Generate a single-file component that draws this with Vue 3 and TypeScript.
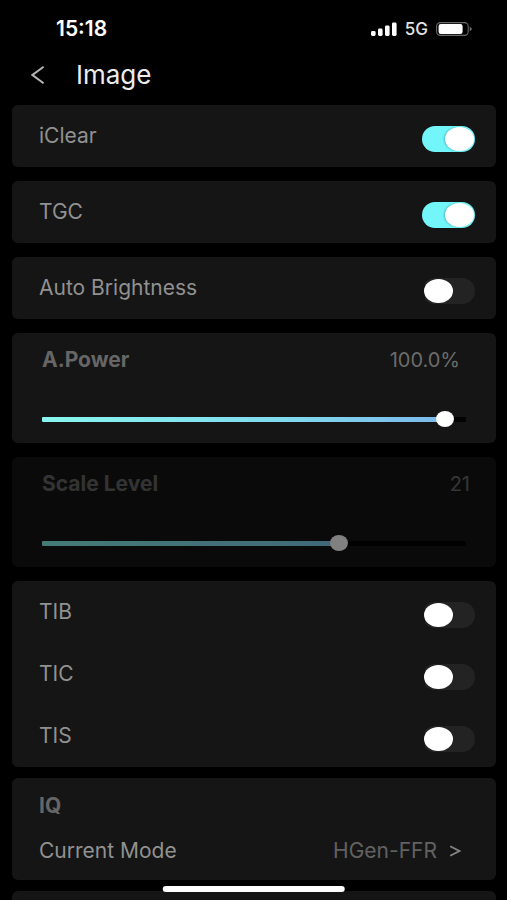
<script setup lang="ts">
import { reactive } from 'vue'

interface Toggle {
  id: string
  label: string
  on: boolean
}

interface Slider {
  id: string
  label: string
  value: number
  min: number
  max: number
  step: number
  unit: string
  digits: number
  disabled: boolean
}

const toggles = reactive<Toggle[]>([
  { id: 'iclear', label: 'iClear', on: true },
  { id: 'tgc', label: 'TGC', on: true },
  { id: 'auto-brightness', label: 'Auto Brightness', on: false },
])

const sliders = reactive<Slider[]>([
  { id: 'power', label: 'A.Power', value: 100, min: 0, max: 103, step: 0.5, unit: '%', digits: 1, disabled: false },
  { id: 'scale', label: 'Scale Level', value: 21, min: 4, max: 28, step: 1, unit: '', digits: 0, disabled: true },
])

const indices = reactive<Toggle[]>([
  { id: 'tib', label: 'TIB', on: false },
  { id: 'tic', label: 'TIC', on: false },
  { id: 'tis', label: 'TIS', on: false },
])

function fraction(s: Slider): number {
  return (s.value - s.min) / (s.max - s.min)
}
</script>

<template>
  <div class="screen">
    <div class="status">
      <span class="time">15:18</span>
      <div class="indicators">
        <svg class="signal" viewBox="0 0 26 14" aria-hidden="true">
          <rect x="0" y="9" width="4.6" height="5" rx="1.4" />
          <rect x="7" y="6.5" width="4.6" height="7.5" rx="1.4" />
          <rect x="14" y="3.5" width="4.6" height="10.5" rx="1.4" />
          <rect x="21" y="0.5" width="4.6" height="13.5" rx="1.4" />
        </svg>
        <span class="network">5G</span>
        <svg class="battery" viewBox="0 0 36 14" aria-hidden="true">
          <rect x="0.6" y="0.6" width="31.6" height="12.8" rx="3.8" fill="none" stroke="#6a6a6a" stroke-width="1.1" />
          <rect x="2.6" y="2.1" width="24" height="9.8" rx="2.2" fill="#fff" />
          <path d="M33.7 4.8 Q35.9 5.6 35.9 7 T33.7 9.2 Z" fill="#6a6a6a" />
        </svg>
      </div>
    </div>

    <header class="header">
      <button class="back" type="button" aria-label="Back">
        <svg viewBox="0 0 14 20" aria-hidden="true">
          <path d="M12.6 1.8 L1.5 10 L12.6 18.2" />
        </svg>
      </button>
      <h1>Image</h1>
    </header>

    <main class="content">
      <div class="stack">
        <section v-for="t in toggles" :key="t.id" class="card">
          <div class="row">
            <label :for="t.id">{{ t.label }}</label>
            <input :id="t.id" v-model="t.on" class="switch" type="checkbox" role="switch" />
          </div>
        </section>

        <section v-for="s in sliders" :key="s.id" class="card slider-card" :class="{ dimmed: s.disabled }">
          <div class="slider-head">
            <label class="caption" :for="s.id">{{ s.label }}</label>
            <output :for="s.id" :class="{ inset: s.unit }">{{ s.value.toFixed(s.digits) }}{{ s.unit }}</output>
          </div>
          <input
            :id="s.id"
            v-model.number="s.value"
            class="slider"
            type="range"
            :min="s.min"
            :max="s.max"
            :step="s.step"
            :disabled="s.disabled"
            :style="{ '--fraction': fraction(s) }"
          />
        </section>

        <section class="card">
          <div v-for="t in indices" :key="t.id" class="row">
            <label :for="t.id">{{ t.label }}</label>
            <input :id="t.id" v-model="t.on" class="switch" type="checkbox" role="switch" />
          </div>
        </section>
      </div>

      <div class="stack tail">
        <section class="card mode-card">
          <h2 class="caption">IQ</h2>
          <button class="mode" type="button">
            <span>Current Mode</span>
            <span class="mode-value">
              HGen-FFR
              <svg viewBox="0 0 12 12" aria-hidden="true">
                <path d="M1.2 1.2 L10.4 6 L1.2 10.8" />
              </svg>
            </span>
          </button>
        </section>
        <section class="card next-card"></section>
      </div>
    </main>

    <div class="home-bar"></div>
  </div>
</template>

<style>
body {
  margin: 0;
  background: #000;
}
</style>

<style scoped>
.screen {
  position: relative;
  display: flex;
  flex-direction: column;
  box-sizing: border-box;
  height: 100vh;
  overflow: hidden;
  background: #000;
  color: #919191;
  font-family: Inter, "Liberation Sans", sans-serif;
  font-size: 21px;
  line-height: 20px;
}

.status {
  display: flex;
  flex: none;
  align-items: center;
  justify-content: space-between;
  padding: 19px 35px 0 56px;
  color: #fff;
}

.time {
  font-size: 21px;
  font-weight: 600;
}

.indicators {
  display: flex;
  align-items: center;
  gap: 8px;
}

.signal {
  width: 26px;
  height: 14px;
  fill: #fff;
}

.network {
  color: #e4e4e4;
  font-size: 17px;
  font-weight: 500;
}

.battery {
  width: 36px;
  height: 14px;
}

.header {
  display: flex;
  flex: none;
  align-items: center;
  gap: 22px;
  padding: 20px 22px 14px;
}

.back {
  display: flex;
  align-items: center;
  justify-content: center;
  width: 32px;
  height: 32px;
  padding: 0;
  border: 0;
  background: none;
}

.back svg {
  width: 14px;
  height: 20px;
  fill: none;
  stroke: #b4b4b4;
  stroke-width: 2;
}

h1 {
  margin: 0;
  color: #ececec;
  font-size: 26px;
  font-weight: 400;
  line-height: 32px;
}

.content {
  flex: 1;
  min-height: 0;
  overflow: hidden;
  padding: 0 11px 0 12px;
}

.stack {
  display: flex;
  flex-direction: column;
  gap: 14px;
}

.tail {
  gap: 11px;
  margin-top: 11px;
}

.card {
  border-radius: 6px;
  background: #151515;
}

.row {
  display: flex;
  align-items: flex-start;
  justify-content: space-between;
  padding: 21px 21px 15px 27px;
}

.switch {
  display: flex;
  flex: none;
  align-items: center;
  box-sizing: border-box;
  width: 53px;
  height: 26px;
  margin: 0;
  padding: 0 1px 0 2px;
  border-radius: 13px;
  background: linear-gradient(#232323, #232323) right / 50px 26px no-repeat;
  appearance: none;
}

.switch::before {
  width: 29px;
  height: 24px;
  border-radius: 50%;
  background: #fff;
  content: "";
}

.switch:checked {
  justify-content: flex-end;
  background: #72f6fa;
}

.switch:checked::before {
  box-shadow: -1px 0 2px rgba(0, 60, 70, 0.3);
}

.slider-card {
  padding: 17px 26px 16px 30px;
}

.dimmed {
  opacity: 0.5;
}

.slider-head {
  display: flex;
  justify-content: space-between;
  color: #6c6c6c;
  font-size: 20px;
}

.caption {
  margin: 0;
  color: #666;
  font-size: 21px;
  font-weight: 700;
  line-height: 20px;
}

.inset {
  padding-right: 10px;
}

.slider {
  display: block;
  box-sizing: border-box;
  width: calc(100% - 4px);
  height: 16px;
  margin: 41px 0 0;
  background: none;
  appearance: none;
}

.slider::-webkit-slider-runnable-track {
  --stop: calc(9px + (100% - 18px) * var(--fraction));
  height: 5px;
  border-radius: 1px;
  background:
    linear-gradient(90deg, transparent var(--stop), #030303 var(--stop)),
    linear-gradient(90deg, #88f6ee, #80d8ee 60%, #7ab4ea);
}

.slider::-webkit-slider-thumb {
  width: 18px;
  height: 16px;
  margin-top: -6px;
  border-radius: 50%;
  background: #fff;
  appearance: none;
}

.mode-card {
  padding: 18px 35px 19px 27px;
}

.mode {
  display: flex;
  align-items: center;
  justify-content: space-between;
  width: 100%;
  margin-top: 25px;
  padding: 0;
  border: 0;
  background: none;
  color: inherit;
  font: inherit;
}

.mode-value {
  display: flex;
  align-items: center;
  gap: 12px;
  color: #626262;
}

.mode-value svg {
  width: 12px;
  height: 12px;
  fill: none;
  stroke: #858585;
  stroke-width: 1.8;
}

.next-card {
  height: 62px;
}

.home-bar {
  position: absolute;
  bottom: 8px;
  left: 50%;
  width: 36%;
  height: 6px;
  border-radius: 3px;
  background: #fff;
  transform: translateX(-50%);
}
</style>
